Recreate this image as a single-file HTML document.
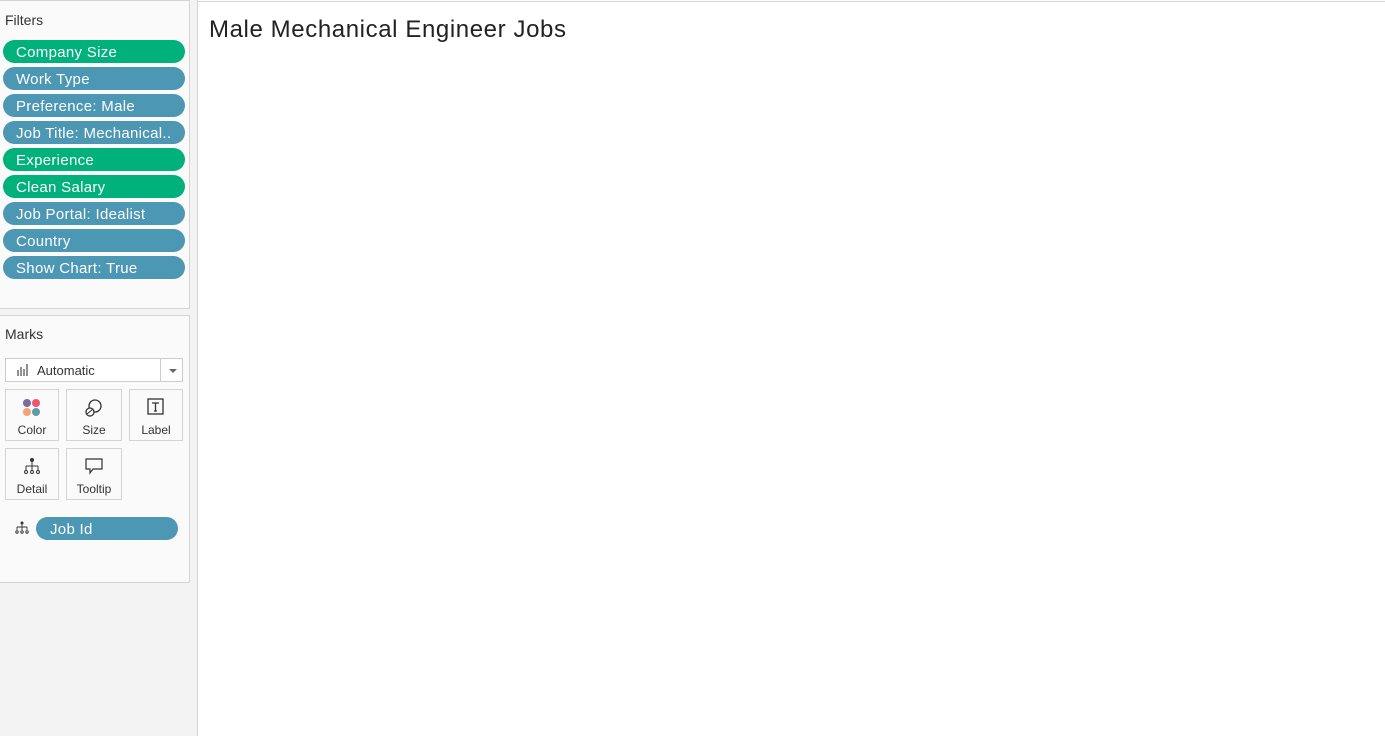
<!DOCTYPE html>
<html><head><style>
body{margin:0;width:1385px;height:736px;background:#fff;font-family:"Liberation Sans",sans-serif;position:relative;overflow:hidden}
.side{position:absolute;left:0;top:0;width:197px;height:736px;background:#f3f3f3;border-right:1px solid #d4d4d4}
.card{position:absolute;left:0;width:189px;background:#fafafa;border:1px solid #d4d4d4;border-left:none}
.h{position:absolute;left:5px;font-size:14px;color:#333}
.pill{position:absolute;left:3px;width:182px;height:23px;border-radius:12px;color:#fff;font-size:15px;line-height:25px;text-indent:13px;white-space:nowrap;letter-spacing:.3px}
.g{background:#00b17b}.b{background:#4b97b4}
.btn{position:absolute;width:52px;height:50px;border:1px solid #d4d4d4;background:#fafafa;font-size:12px;color:#333;text-align:center}
.btn span{position:absolute;left:0;right:0;bottom:3px}
.btn svg{position:absolute;left:50%;top:8px;transform:translateX(-50%)}
.main{position:absolute;left:198px;top:1px;right:0;bottom:0;border-top:1px solid #d4d4d4}
</style></head><body>
<div class="side">
<div class="card" style="top:0;height:307px"></div>
<div class="h" style="top:12px">Filters</div>
<div class="pill g" style="top:40px">Company Size</div>
<div class="pill b" style="top:67px">Work Type</div>
<div class="pill b" style="top:94px">Preference: Male</div>
<div class="pill b" style="top:121px">Job Title: Mechanical..</div>
<div class="pill g" style="top:148px">Experience</div>
<div class="pill g" style="top:175px">Clean Salary</div>
<div class="pill b" style="top:202px">Job Portal: Idealist</div>
<div class="pill b" style="top:229px">Country</div>
<div class="pill b" style="top:256px">Show Chart: True</div>
<div class="card" style="top:315px;height:266px"></div>
<div class="h" style="top:326px">Marks</div>
<div style="position:absolute;left:5px;top:358px;width:176px;height:22px;border:1px solid #ccc;background:#fff;font-size:13px;color:#333;line-height:23px">
<svg width="14" height="12" style="position:absolute;left:11px;top:5px"><path d="M1 12V6M4 12V3M7 12V5M10 12V0" stroke="#555" stroke-width="1.3"/></svg>
<span style="position:absolute;left:31px">Automatic</span>
<div style="position:absolute;left:154px;top:0;bottom:0;border-left:1px solid #ccc;width:22px"></div>
<div style="position:absolute;left:163px;top:10px;border:4px solid transparent;border-top:4px solid #666;border-bottom:none"></div>
</div>
<div class="btn" style="left:5px;top:389px"><svg width="20" height="20"><circle cx="5" cy="5" r="4" fill="#7b6a9a"/><circle cx="14" cy="5" r="4" fill="#f0566a"/><circle cx="5" cy="14" r="4" fill="#f7a274"/><circle cx="14" cy="14" r="4" fill="#5f9aa8"/></svg><span>Color</span></div>
<div class="btn" style="left:66px;top:389px;width:54px"><svg width="20" height="20"><circle cx="11" cy="8" r="6" fill="none" stroke="#333" stroke-width="1.3"/><circle cx="6" cy="14" r="4" fill="#fafafa" stroke="#333" stroke-width="1.3"/><path d="M3 16l6-5" stroke="#333"/></svg><span>Size</span></div>
<div class="btn" style="left:129px;top:389px"><svg width="18" height="18"><rect x="1" y="1" width="15" height="15" fill="none" stroke="#333" stroke-width="1.3"/><path d="M5 5h7M8.5 5v8M7 13h3" stroke="#333" stroke-width="1.3"/></svg><span>Label</span></div>
<div class="btn" style="left:5px;top:448px"><svg width="18" height="18"><circle cx="9" cy="3" r="2" fill="#333"/><path d="M9 5v4M3 9h12M3 9v4M9 9v4M15 9v4" stroke="#333"/><circle cx="3" cy="15" r="1.5" fill="none" stroke="#333"/><circle cx="9" cy="15" r="1.5" fill="none" stroke="#333"/><circle cx="15" cy="15" r="1.5" fill="none" stroke="#333"/></svg><span>Detail</span></div>
<div class="btn" style="left:66px;top:448px;width:54px"><svg width="20" height="18"><path d="M2 2h16v10H9l-3 4v-4H2z" fill="none" stroke="#333" stroke-width="1.2"/></svg><span>Tooltip</span></div>
<svg width="14" height="14" style="position:absolute;left:15px;top:521px"><circle cx="7" cy="2" r="1.5" fill="#333"/><path d="M7 3v3M2 6h10M2 6v3M7 6v3M12 6v3" stroke="#333" stroke-width=".9"/><circle cx="2" cy="11" r="1.2" fill="none" stroke="#333"/><circle cx="7" cy="11" r="1.2" fill="none" stroke="#333"/><circle cx="12" cy="11" r="1.2" fill="none" stroke="#333"/></svg>
<div class="pill b" style="left:36px;top:517px;width:142px;text-indent:14px">Job Id</div>
</div>
<div class="main"><div style="position:absolute;left:11px;top:14px;font-size:24px;color:#222;letter-spacing:.6px">Male Mechanical Engineer Jobs</div></div>
</body></html>
